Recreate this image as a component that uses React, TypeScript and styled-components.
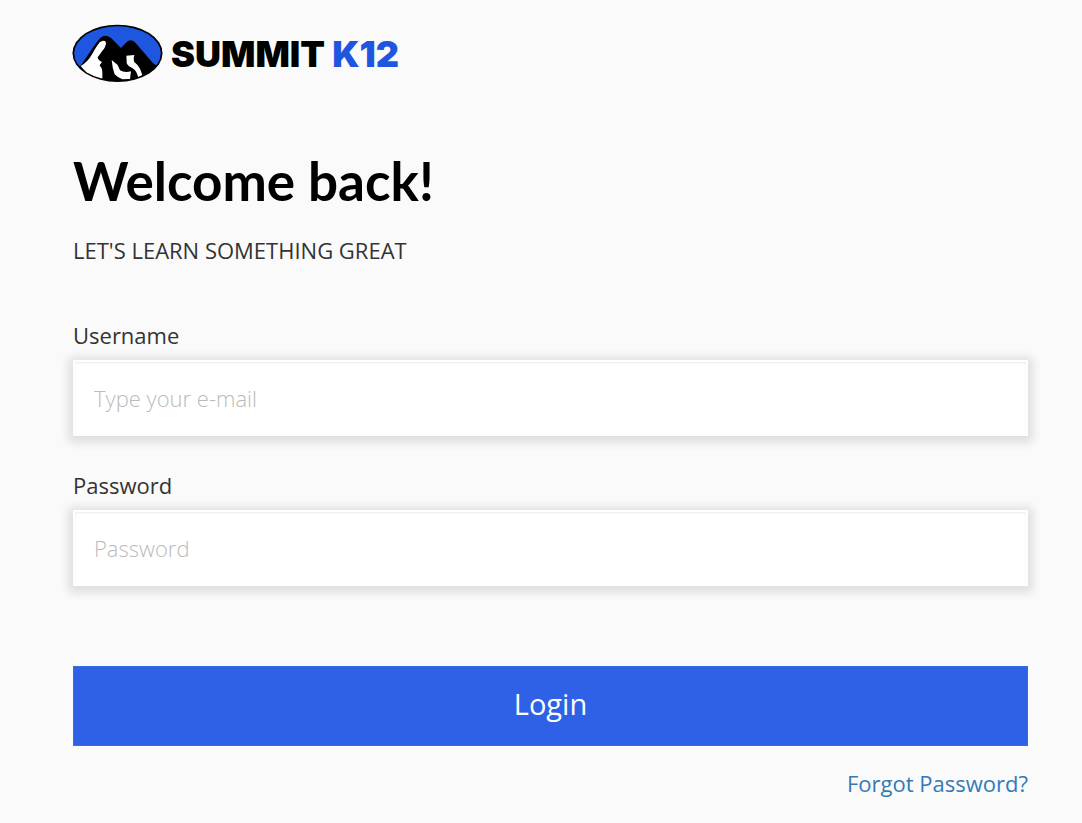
import React from "react";
import styled, { createGlobalStyle } from "styled-components";

const GlobalStyle = createGlobalStyle`
  * { box-sizing: border-box; }
  body {
    margin: 0;
    background: #fafafa;
    color: #333;
    font-family: "Open Sans", sans-serif;
    font-size: 22px;
    line-height: 32px;
  }
`;

const Page = styled.main`
  padding: 24px 54px 24px 73px;
`;

const Brand = styled.header`
  display: flex;
  align-items: center;
  gap: 7px;
`;

const BrandMark = styled.svg`
  width: 91px;
  height: 58px;
  flex: none;
  overflow: visible;
`;

const BrandName = styled.span`
  padding-top: 2px;
  color: #000;
  font-family: Inter, sans-serif;
  font-size: 36px;
  font-weight: 900;
  line-height: 56px;
  white-space: nowrap;
`;

const BrandAccent = styled.span`
  color: #1f56e0;
`;

const Title = styled.h1`
  margin: 67px 0 0;
  color: #000;
  font-family: Lato, sans-serif;
  font-size: 53px;
  font-weight: 700;
  line-height: 64px;
`;

const Tagline = styled.p`
  margin: 21px 0 0;
  text-transform: uppercase;
`;

const Form = styled.form`
  margin-top: 53px;
`;

const Field = styled.div`
  display: flex;
  flex-direction: column;
  gap: 9px;
  margin-bottom: 33px;
`;

const Label = styled.label`
  align-self: flex-start;
`;

const Input = styled.input`
  width: 100%;
  height: 76px;
  padding: 0 19px;
  border: 2px solid #fff;
  border-radius: 1px;
  background: #fff;
  box-shadow: 0 2px 10px 5px rgba(0, 0, 0, 0.11), inset 0 1px 2px rgba(0, 0, 0, 0.08);
  color: #333;
  font: 300 22px/32px "Open Sans", sans-serif;
  outline: none;

  &::placeholder {
    color: #bbb;
    opacity: 1;
  }
`;

const LoginButton = styled.button`
  display: block;
  width: 100%;
  height: 80px;
  margin-top: 80px;
  padding: 0 0 4px;
  border: 1px solid #3a6ae6;
  background: #2e61e5;
  color: #fff;
  font: 400 29px/40px "Open Sans", sans-serif;
  cursor: pointer;
`;

const Footer = styled.div`
  display: flex;
  justify-content: flex-end;
  margin-top: 21px;
`;

const ForgotLink = styled.a`
  color: #337ab7;
  text-decoration: none;
`;

function Mountain() {
  return (
    <BrandMark viewBox="33 27 273 174" aria-hidden="true">
      <defs>
        <clipPath id="badge">
          <ellipse cx="166.500" cy="115" rx="130" ry="81" />
        </clipPath>
      </defs>
      <ellipse cx="166.500" cy="115" rx="135" ry="86" fill="#000" />
      <g clipPath="url(#badge)">
        <path d="M30 27H303V156Q282 154 270 141L219 82Q206 70 194 81L177 99L148 70Q131 55 115 69Q103 82 94 96L57 151L30 170Z" fill="#1f56e0" />
        <path d="M121 78Q132 75 132 87Q130 99 119 110L107 127Q107 135 120 141L113 151Q121 160 121 172V194H101L92 181L86 188L56 153Q77 141 91 116Q105 92 113 82Z" fill="#fff" />
        <path d="M149 135L167 150L174 166Q187 174 207 169L204 192L181 193Q166 187 158 178Q151 160 149 135Z" fill="#fff" />
        <path d="M193 122L217 120Q213 131 216 140Q228 149 234 161L241 180L229 187L225 176Q220 162 205 156Q192 149 194 139Z" fill="#fff" />
      </g>
    </BrandMark>
  );
}

export default function App() {
  return (
    <>
      <GlobalStyle />
      <Page>
        <Brand>
          <Mountain />
          <BrandName>
            SUMMIT <BrandAccent>K12</BrandAccent>
          </BrandName>
        </Brand>
        <Title>Welcome back!</Title>
        <Tagline>Let's learn something great</Tagline>
        <Form onSubmit={(event) => event.preventDefault()}>
          <Field>
            <Label htmlFor="username">Username</Label>
            <Input id="username" type="text" placeholder="Type your e-mail" />
          </Field>
          <Field>
            <Label htmlFor="password">Password</Label>
            <Input id="password" type="password" placeholder="Password" />
          </Field>
          <LoginButton type="submit">Login</LoginButton>
        </Form>
        <Footer>
          <ForgotLink href="#forgot">Forgot Password?</ForgotLink>
        </Footer>
      </Page>
    </>
  );
}
